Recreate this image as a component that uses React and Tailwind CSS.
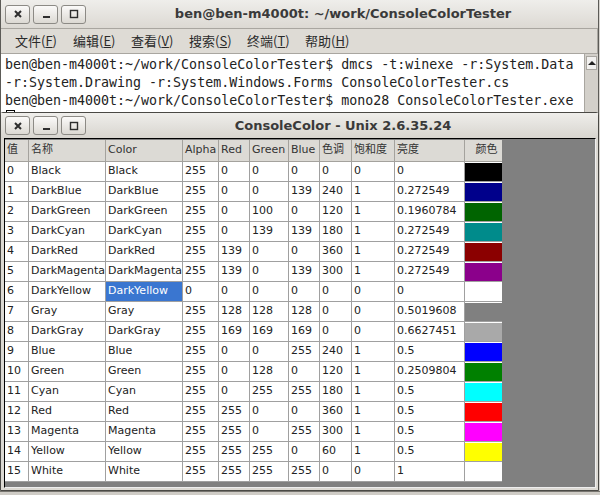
import React from 'react';

const rows = [
  ['0', 'Black', 'Black', '255', '0', '0', '0', '0', '0', '0', '#000000'],
  ['1', 'DarkBlue', 'DarkBlue', '255', '0', '0', '139', '240', '1', '0.272549', '#00008b'],
  ['2', 'DarkGreen', 'DarkGreen', '255', '0', '100', '0', '120', '1', '0.1960784', '#006400'],
  ['3', 'DarkCyan', 'DarkCyan', '255', '0', '139', '139', '180', '1', '0.272549', '#008b8b'],
  ['4', 'DarkRed', 'DarkRed', '255', '139', '0', '0', '360', '1', '0.272549', '#8b0000'],
  ['5', 'DarkMagenta', 'DarkMagenta', '255', '139', '0', '139', '300', '1', '0.272549', '#8b008b'],
  ['6', 'DarkYellow', 'DarkYellow', '0', '0', '0', '0', '0', '0', '0', '#ffffff'],
  ['7', 'Gray', 'Gray', '255', '128', '128', '128', '0', '0', '0.5019608', '#808080'],
  ['8', 'DarkGray', 'DarkGray', '255', '169', '169', '169', '0', '0', '0.6627451', '#a9a9a9'],
  ['9', 'Blue', 'Blue', '255', '0', '0', '255', '240', '1', '0.5', '#0000ff'],
  ['10', 'Green', 'Green', '255', '0', '128', '0', '120', '1', '0.2509804', '#008000'],
  ['11', 'Cyan', 'Cyan', '255', '0', '255', '255', '180', '1', '0.5', '#00ffff'],
  ['12', 'Red', 'Red', '255', '255', '0', '0', '360', '1', '0.5', '#ff0000'],
  ['13', 'Magenta', 'Magenta', '255', '255', '0', '255', '300', '1', '0.5', '#ff00ff'],
  ['14', 'Yellow', 'Yellow', '255', '255', '255', '0', '60', '1', '0.5', '#ffff00'],
  ['15', 'White', 'White', '255', '255', '255', '255', '0', '0', '1', '#ffffff'],
];

const headers = ['值', '名称', 'Color', 'Alpha', 'Red', 'Green', 'Blue', '色调', '饱和度', '亮度'];

const gridCols = 'grid grid-cols-[24px_77px_77px_36px_31px_39px_31px_32px_43px_70px_37px]';

function WinButtons() {
  const btn =
    'w-[25px] h-[19px] rounded-[3px] border border-[#8c8a85] bg-gradient-to-b from-[#fbfaf9] to-[#dcd9d3] flex items-center justify-center';
  return (
    <div className="flex gap-[3px]">
      <div className={btn}>
        <svg width="10" height="10" viewBox="0 0 10 10">
          <path d="M2 2 L8 8 M8 2 L2 8" stroke="#2e2e2e" strokeWidth="2" />
        </svg>
      </div>
      <div className={btn}>
        <svg width="10" height="10" viewBox="0 0 10 10">
          <rect x="2" y="7" width="7" height="2" fill="#2e2e2e" />
        </svg>
      </div>
      <div className={btn}>
        <svg width="10" height="10" viewBox="0 0 10 10">
          <rect x="1.5" y="1.5" width="7" height="7" fill="none" stroke="#2e2e2e" strokeWidth="1.4" />
        </svg>
      </div>
    </div>
  );
}

const cjk = { fontFamily: '"DejaVu Sans", "Noto Sans CJK SC", sans-serif' };

function MenuItem({ label, k }) {
  return (
    <div className="w-[58px] text-[13px] text-[#2a2a2a]" style={{ fontFamily: '"Noto Sans CJK SC", sans-serif' }}>
      {label}(<span className="underline">{k}</span>)
    </div>
  );
}

export default function App() {
  return (
    <div className="relative w-[600px] h-[495px] overflow-hidden bg-[#d6d3ce]" style={cjk}>
      {/* Terminal window */}
      <div className="flex flex-col w-[599px] h-[490px] border-l border-r border-[#5c5b57] bg-[#dedbd6]">
        <div className="h-[28px] flex items-center px-[4px] bg-gradient-to-b from-[#efeeeb] to-[#dcd9d3] relative">
          <WinButtons />
          <div className="flex-1 text-center font-bold text-[13px] text-[#3a3a3a] pl-[6px]">
            ben@ben-m4000t: ~/work/ConsoleColorTester
          </div>
        </div>
        <div className="h-[26px] flex items-center pl-[14px] border-t border-b border-r border-[#a9a6a0] bg-[#dedbd5]">
          <MenuItem label="文件" k="F" />
          <MenuItem label="编辑" k="E" />
          <MenuItem label="查看" k="V" />
          <MenuItem label="搜索" k="S" />
          <MenuItem label="终端" k="T" />
          <MenuItem label="帮助" k="H" />
        </div>
        <div className="flex flex-1">
          <div
            className="flex-1 bg-white pl-[4px] pt-[2px] text-[13.3px] leading-[18px] text-[#222] whitespace-nowrap overflow-hidden"
            style={{ fontFamily: '"DejaVu Sans Mono", monospace' }}
          >
            <div>ben@ben-m4000t:~/work/ConsoleColorTester$ dmcs -t:winexe -r:System.Data</div>
            <div>-r:System.Drawing -r:System.Windows.Forms ConsoleColorTester.cs</div>
            <div>ben@ben-m4000t:~/work/ConsoleColorTester$ mono28 ConsoleColorTester.exe</div>
            <div className="w-[9px] h-[15px] border border-black ml-[1px]" />
          </div>
          <div className="w-[14px] bg-[#d3d0ca] border-l border-[#a9a6a0] pt-[2px]">
            <div className="h-[14px] mx-[1px] bg-[#f2f1ef] border border-[#a9a6a0] flex items-center justify-center">
              <svg width="8" height="6" viewBox="0 0 8 6">
                <path d="M0 5 L4 1 L8 5 Z" fill="#222" />
              </svg>
            </div>
          </div>
        </div>
      </div>

      {/* Console color window */}
      <div className="absolute left-0 top-[112px] w-[599px] h-[379px] flex flex-col border border-[#4a4945] rounded-t-[3px] bg-[#dcd9d3]">
        <div className="h-[25px] flex items-center px-[4px] bg-gradient-to-b from-[#efeeeb] to-[#d8d5cf]">
          <WinButtons />
          <div className="flex-1 text-center font-bold text-[13px] text-[#3a3a3a] pl-[6px]">
            ConsoleColor - Unix 2.6.35.24
          </div>
        </div>
        <div className="flex-1 ml-[3px] mr-[2px] mb-[2px] bg-[#808080] border-t border-l border-black border-r border-b border-r-[#eeeeee] border-b-[#eeeeee] pt-[1px]">
          <div className={`${gridCols} w-[497px] text-[11px] text-[#222]`}>
            {headers.map((h) => (
              <div
                key={h}
                className="h-[22px] pl-[2px] flex items-center bg-[#dcdad5] border-r border-b border-[#a4a29d] text-[#333] text-[11px]"
              >
                {h}
              </div>
            ))}
            <div className="h-[22px] flex items-center justify-center bg-[#dcdad5] border-b border-[#a4a29d] text-[#333] text-[11px] pl-[6px]">
              颜色
            </div>
            {rows.map((r) => (
              <React.Fragment key={r[0]}>
                {r.slice(0, 10).map((c, i) => {
                  const sel = r[0] === '6' && i === 2;
                  return (
                    <div
                      key={i}
                      className={`h-[20px] pl-[2px] flex items-center border-r border-b border-[#a0a0a0] whitespace-nowrap overflow-hidden ${
                        sel ? 'bg-[#3a76d0] text-white' : 'bg-white'
                      }`}
                    >
                      {c}
                    </div>
                  );
                })}
                <div className="h-[20px] border-b border-[#a0a0a0] bg-white">
                  <div className="h-[18px] mt-[1px]" style={{ backgroundColor: r[10] }} />
                </div>
              </React.Fragment>
            ))}
          </div>
        </div>
      </div>
      <div className="absolute left-0 bottom-0 w-[600px] h-[4px] bg-[#cfccc6] border-t border-[#77756f]" />
    </div>
  );
}
